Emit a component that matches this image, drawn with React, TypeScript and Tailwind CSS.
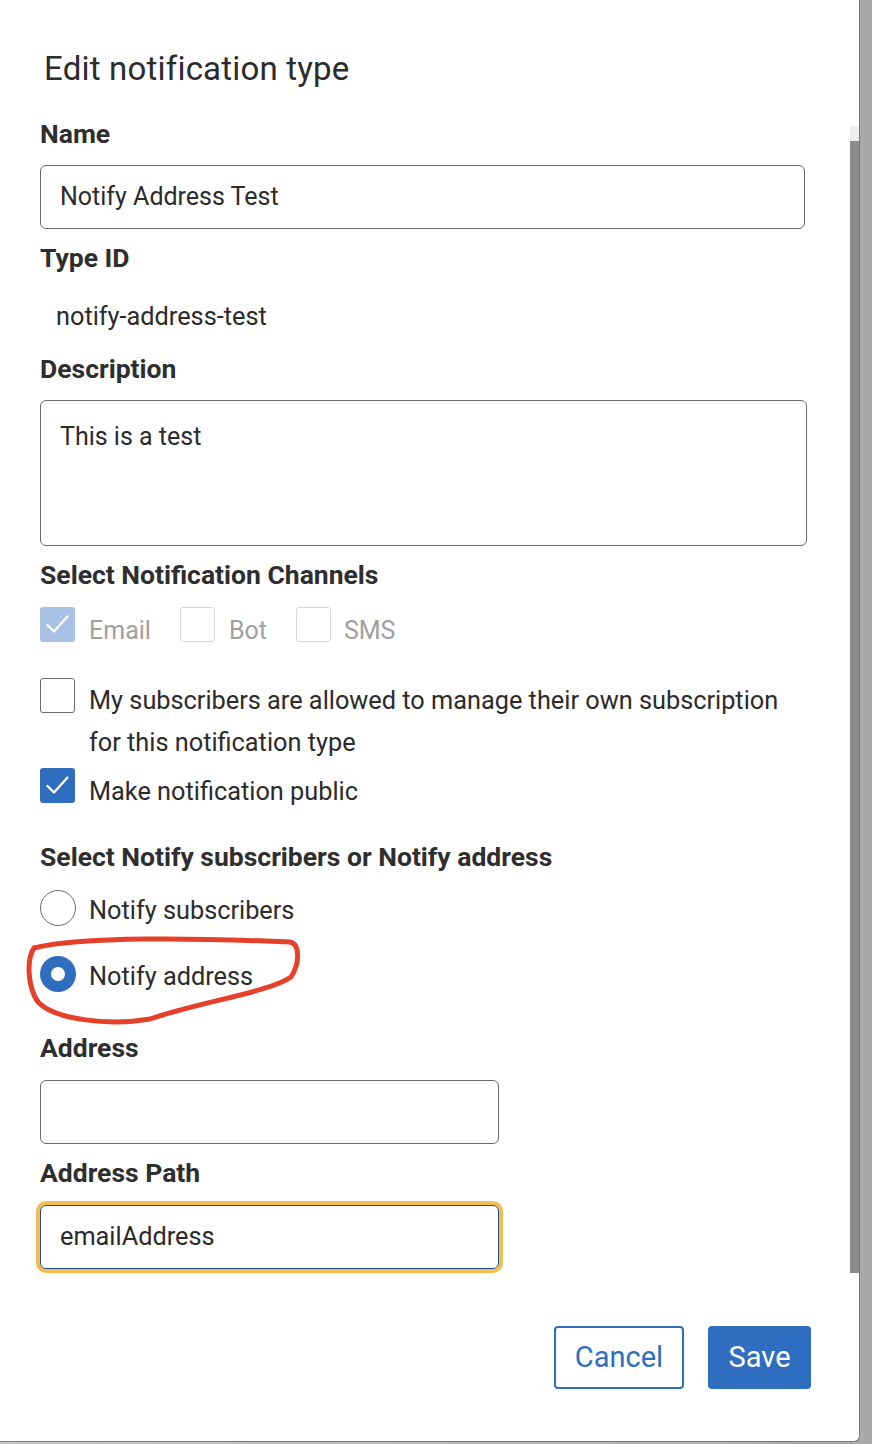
import React from "react";

const font = { fontFamily: "Roboto, 'Liberation Sans', sans-serif" };

function Check({ color = "white" }: { color?: string }) {
  return (
    <svg width="35" height="35" viewBox="0 0 35 35" className="block">
      <polyline points="7.5,18 14,24.5 27.5,9.5" fill="none" stroke={color} strokeWidth="2.3" strokeLinecap="round" strokeLinejoin="round" />
    </svg>
  );
}

function Label({ children, className = "" }: { children: React.ReactNode; className?: string }) {
  return <div className={`text-[26.5px] font-bold leading-[30px] text-[#2e2e2e] ${className}`}>{children}</div>;
}

export default function App() {
  return (
    <div className="w-[872px] h-[1444px] flex bg-gradient-to-r from-[#c9c9c9] to-[#a9a9a9] overflow-hidden" style={font}>
      <div className="relative w-[860px] h-[1442px] bg-white border-r border-b border-[#7a7a7a] rounded-br-[6px] flex flex-col">
        {/* scrollbar */}
        <div className="absolute right-0 top-[126px] w-[9px] flex flex-col">
          <div className="h-[15px] bg-[#eeeeee]" />
          <div className="h-[1132px] bg-[#8c8c8c]" />
        </div>

        <div className="pl-[44px] pt-[47px] text-[33px] leading-[44px] text-[#2b2b2b] tracking-[0.2px]">
          Edit notification type
        </div>

        <div className="pl-[40px] pr-[52px] flex flex-col text-[#2b2b2b]">
          <Label className="mt-[28px]">Name</Label>
          <div className="mt-[16px] w-[765px] h-[64px] border border-[#6b6b6b] rounded-[6px] flex items-center pl-[19px] text-[25px]">
            Notify Address Test
          </div>

          <Label className="mt-[14px]">Type ID</Label>
          <div className="mt-[29px] pl-[16px] text-[25.3px] leading-[30px]">notify-address-test</div>

          <Label className="mt-[22px]">Description</Label>
          <div className="mt-[16px] w-[767px] h-[146px] border border-[#6b6b6b] rounded-[6px] pl-[19px] pt-[20px] text-[25px] leading-[32px]">
            This is a test
          </div>

          <Label className="mt-[14px]">Select Notification Channels</Label>
          <div className="mt-[17px] flex items-start h-[35px]">
            <div className="w-[35px] h-[35px] rounded-[3px] bg-[#a8c2e5]"><Check /></div>
            <span className="ml-[14px] mt-[6px] leading-[35px] text-[25px] text-[#a0a0a0]">Email</span>
            <div className="ml-[29px] w-[35px] h-[35px] rounded-[3px] border border-[#d9d9d9]" />
            <span className="ml-[14px] mt-[6px] leading-[35px] text-[25px] text-[#a0a0a0]">Bot</span>
            <div className="ml-[29px] w-[35px] h-[35px] rounded-[3px] border border-[#d9d9d9]" />
            <span className="ml-[13px] mt-[6px] leading-[35px] text-[25px] text-[#a0a0a0]">SMS</span>
          </div>

          <div className="mt-[36px] flex items-start">
            <div className="w-[35px] h-[35px] shrink-0 rounded-[3px] border border-[#6b6b6b]" />
            <div className="ml-[14px] text-[25.3px] leading-[42px] mt-[2px]">
              My subscribers are allowed to manage their own subscription
              <br />
              for this notification type
            </div>
          </div>
          <div className="mt-[4px] flex items-start">
            <div className="w-[35px] h-[35px] shrink-0 rounded-[3px] bg-[#2f6dbf]"><Check /></div>
            <span className="ml-[14px] text-[25.3px] leading-[35px] mt-[6px]">Make notification public</span>
          </div>

          <Label className="mt-[33px]">Select Notify subscribers or Notify address</Label>

          <div className="relative mt-[16px] flex flex-col">
            <div className="flex items-center h-[40px]">
              <div className="w-[36px] h-[36px] rounded-full border border-[#6b6b6b]" />
              <span className="ml-[13px] text-[25.3px] mt-[5px]">Notify subscribers</span>
            </div>
            <div className="mt-[26px] flex items-center h-[40px]">
              <div className="w-[36px] h-[36px] rounded-full bg-[#2f6dbf] flex items-center justify-center">
                <div className="w-[14px] h-[14px] rounded-full bg-white" />
              </div>
              <span className="ml-[13px] text-[25.3px] mt-[5px]">Notify address</span>
            </div>
            <svg className="absolute left-[-40px] top-[-20px] pointer-events-none" width="340" height="180" viewBox="0 868 340 180">
              <path
                d="M 34 948 C 80 936, 200 938, 290 942 C 300 944, 300 963, 291 977 C 270 992, 200 1002, 150 1019 C 110 1026, 55 1020, 38 1002 C 28 988, 26 960, 34 948"
                fill="none"
                stroke="#e6402a"
                strokeWidth="5"
                strokeLinecap="round"
                strokeLinejoin="round"
              />
            </svg>
          </div>

          <Label className="mt-[39px]">Address</Label>
          <div className="mt-[17px] w-[459px] h-[64px] border border-[#6b6b6b] rounded-[6px]" />

          <Label className="mt-[14px]">Address Path</Label>
          <div className="mt-[17px] w-[459px] h-[64px] rounded-[6px] border border-[#1f4e8c] ring-[4px] ring-[#f5bd50] flex items-center pl-[19px] text-[25.3px]">
            emailAddress
          </div>
        </div>

        <div className="mt-auto mb-[52px] pr-[48px] flex justify-end gap-[24px]">
          <button className="w-[130px] h-[63px] rounded-[4px] border-2 border-[#2f6dbf] text-[#2f6dbf] text-[29px] bg-white">Cancel</button>
          <button className="w-[103px] h-[63px] rounded-[4px] bg-[#2f6dbf] text-white text-[29px]">Save</button>
        </div>
      </div>
    </div>
  );
}
